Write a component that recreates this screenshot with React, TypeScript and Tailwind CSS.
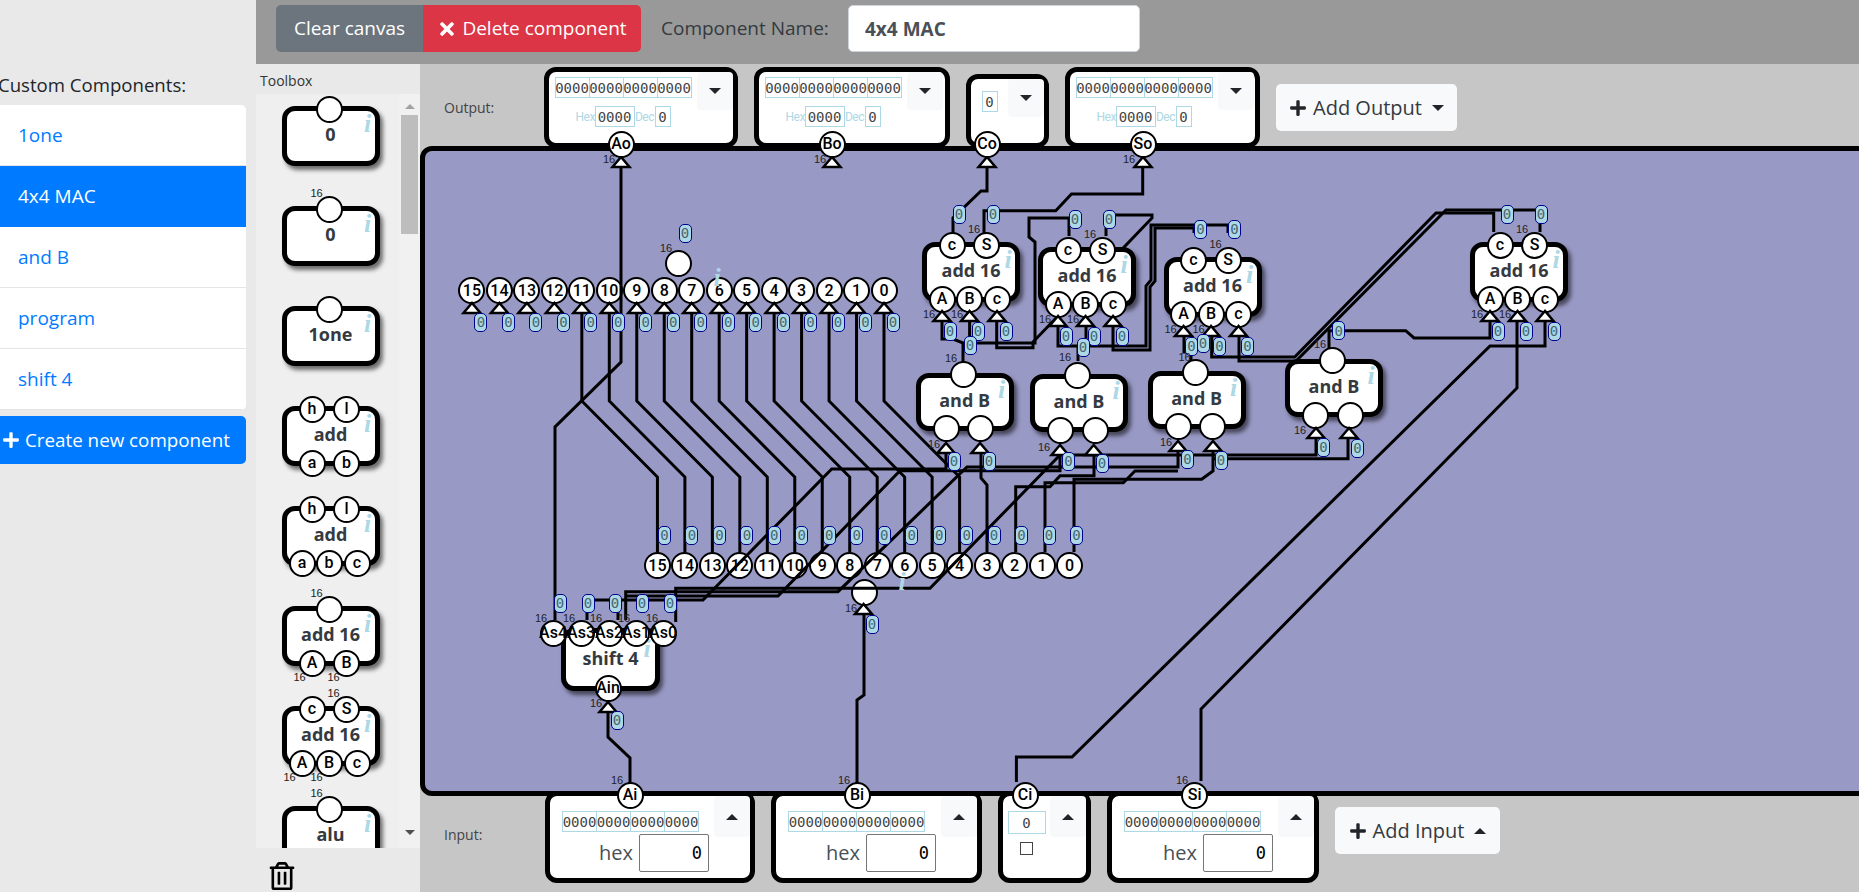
import type { ReactNode } from "react";
import { FaPlus, FaRegTrashAlt, FaTimes } from "react-icons/fa";

type P = [number, string?];

const MONO = "font-['DejaVu_Sans_Mono',monospace]";

// page coordinates of the parts on the board
const adders = [
  { x: 922, y: 245 },
  { x: 1038, y: 250 },
  { x: 1163.5, y: 260 },
  { x: 1470, y: 245 },
];
const ands = [
  { x: 915.7, y: 372.7 },
  { x: 1030, y: 374 },
  { x: 1147.7, y: 370.7 },
  { x: 1285, y: 359 },
];
const topBit = (i: number) => 884 - 27.47 * i;
const lowBit = (i: number) => 1069.5 - 27.47 * i;
const bits = Array.from({ length: 16 }, (_, i) => i);

const wires = [
  ...bits.slice(0, 12).map((i) => {
    const a = topBit(i);
    const b = a + 75.6;
    return `${a},313 ${a},401 ${b},477 ${b},552`;
  }),
  "621,167 621,362 555,427 555,620",
  "953,233 953,218 981,191 987,191 987,167",
  "984,233 984,210.7 1055.7,210.7 1071.5,194 1142.7,194 1142.7,167",
  "1016.4,782 1016.4,757 1072,757 1490,346 1545,346 1545,321",
  "1201,781 1201,709 1517,388 1517,321",
  "1329,361 1329,330.7 1405.7,330.7 1414,338 1490,338 1490,321",
  "1211.7,336 1211.7,357 1294.7,357 1436,213 1493.7,213 1493.7,232",
  "1239,336 1239,361 1296,361 1446,210 1540,210 1540,232",
  "1194,233 1194,228 1155,228 1155,281 1150,287 1150,350 1113,350 1113,326",
  "1228,233 1228,225 1151,225 1151,280 1146,286 1146,346 1058,346 1058,326",
  "1069,236 1069,218 1029,218 1029,237 1035,242 1035,343 963,343 953,339 942,339 942,321",
  "1106,236 1106,215 1152,215 1152,218 1033,342 1033,347.7 996.7,347.7 996.7,321",
  "963,362 963,343",
  "969.6,321 969.6,343",
  "1078,361 1078,347",
  "1086,326 1086,347",
  "1191,362 1191,346",
  "1184,336 1184,352 1191,352",
  "864,615 864,695 857,700 857,783",
  "608,711 608,737 630,758 630,783",
  "587,620 587,600 703,600 831.7,469 946,469 946,451",
  "618,620 618,600",
  "625.7,620 625.7,591.7 838,591.7 967,467 1178,467 1178,449",
  "625.7,596 778,596 900,470.7 1060,470.7 1060,453",
  "675.7,622 675.7,588.3 930,588.3 1060,455 1316,455 1316,438",
  "987,552 987,485 981,478 981,451",
  "1015.7,552 1015.7,486.7 1050,486.7 1060,475.7 1094,475.7 1094,453",
  "1045,552 1045,482.7 1123.3,482.7 1135,471 1178,471",
  "1074,552 1074,479.3 1201.7,479.3 1213,471 1213,449",
  "1213,458.7 1348,458.7 1348,438",
];

const triangles: [number, number][] = [
  [621, 157],
  [832, 157],
  [987, 157],
  [1143, 157],
  [608, 702],
  [863.5, 604],
  ...bits.map((i): [number, number] => [topBit(i), 303]),
  ...adders.flatMap((m): [number, number][] => [
    [m.x + 20, m.y + 66],
    [m.x + 47.5, m.y + 66],
    [m.x + 75, m.y + 66],
  ]),
  [946, 443],
  [980, 443],
  [1060, 445],
  [1093.7, 445],
  [1178, 441],
  [1213, 441],
  [1316, 428],
  [1349, 428],
];

const badges: [number, number][] = [
  [685, 233],
  [872, 624],
  [617, 720],
  [560, 603],
  [588, 603],
  [615, 603],
  [642, 603],
  [670, 603],
  ...bits.map((i): [number, number] => [topBit(i) + 9, 322]),
  ...bits.map((i): [number, number] => [lowBit(i) + 7, 535]),
  ...adders.flatMap((m): [number, number][] => [
    [m.x + 37, m.y - 31],
    [m.x + 71, m.y - 31],
    [m.x + 28, m.y + 86],
    [m.x + 56, m.y + 86],
    [m.x + 84, m.y + 86],
  ]),
  [954, 461],
  [989, 461],
  [1068.5, 461],
  [1102, 463],
  [1187.5, 459],
  [1221, 460],
  [1323.5, 447],
  [1357.5, 448],
  [970, 345],
  [1083, 347],
  [1203, 343],
  [1338.7, 330.7],
];

const sixteens: [number, number][] = [
  [609, 159],
  [820, 159],
  [1129, 159],
  [666, 248],
  [851, 608],
  [596, 703],
  [541, 618],
  [569, 618],
  [596, 618],
  [624, 618],
  [652, 618],
  [617, 780],
  [844, 780],
  [1182, 780],
  ...adders.flatMap((m): [number, number][] => [
    [m.x + 52, m.y - 16],
    [m.x + 7, m.y + 69],
    [m.x + 35, m.y + 69],
  ]),
  [934, 444],
  [951, 358],
  [1044, 447],
  [1065, 357],
  [1166, 442],
  [1184.5, 357],
  [1300, 430],
  [1320, 344],
];

function Pin({ x, y, label }: { x: number; y: number; label?: string }) {
  return (
    <div
      className="absolute flex h-[27px] w-[27px] items-center justify-center rounded-full border-[2.5px] border-black bg-white text-[16px] leading-none text-black font-['Roboto',sans-serif] font-medium"
      style={{ left: x - 13.5, top: y - 13.5 }}
    >
      <span className="whitespace-nowrap">{label}</span>
    </div>
  );
}

function Sixteen({ x, y }: { x: number; y: number }) {
  return (
    <span
      className="absolute -translate-x-1/2 -translate-y-1/2 text-[11px] leading-none text-[#222] font-['Liberation_Sans',sans-serif]"
      style={{ left: x, top: y }}
    >
      16
    </span>
  );
}

function InfoMark({ x, y }: { x: number; y: number }) {
  return (
    <span
      className="absolute -translate-x-1/2 -translate-y-1/2 text-[26px] font-bold italic leading-none text-[#add8e6] font-['Liberation_Serif',serif]"
      style={{ left: x, top: y }}
    >
      i
    </span>
  );
}

function Badge({ x, y }: { x: number; y: number }) {
  return (
    <div
      className={`absolute flex h-[19px] w-[13px] items-center justify-center rounded-[5px] border border-[#00008b] bg-[#add8e6] text-[14px] leading-none text-[#47656e] ${MONO}`}
      style={{ left: x - 6.5, top: y - 9.5 }}
    >
      0
    </div>
  );
}

interface ModuleProps {
  name: string;
  x?: number;
  y?: number;
  w?: number;
  h?: number;
  topY?: number;
  botY?: number;
  top?: P[];
  bottom?: P[];
  marks?: [number, number][];
  iy?: number;
}

function Module({ name, x, y, w = 98, h = 60, topY = 3, botY = 57, top = [], bottom = [], marks = [], iy = 18 }: ModuleProps) {
  return (
    <div
      className={x === undefined ? "relative ml-[25.5px] shrink-0" : "absolute"}
      style={x === undefined ? { width: w, height: h } : { left: x, top: y, width: w, height: h }}
    >
      <div className="absolute inset-0 flex items-center justify-center rounded-[13px] border-[5px] border-black bg-white pb-[3px] text-[18px] font-bold text-[#343a40] shadow-[3px_4px_4px_rgba(0,0,0,0.55)]">
        {name}
      </div>
      <InfoMark x={86} y={iy} />
      {top.map(([dx, label], i) => (
        <Pin key={i} x={dx} y={topY} label={label} />
      ))}
      {bottom.map(([dx, label], i) => (
        <Pin key={i} x={dx} y={botY} label={label} />
      ))}
      {marks.map(([mx, my], i) => (
        <Sixteen key={i} x={mx} y={my} />
      ))}
    </div>
  );
}

function Caret({ up }: { up?: boolean }) {
  return (
    <div
      className={
        up
          ? "h-0 w-0 border-x-[6px] border-b-[6px] border-x-transparent border-b-[#212529]"
          : "h-0 w-0 border-x-[6px] border-t-[6px] border-x-transparent border-t-[#212529]"
      }
    />
  );
}

function CaretButton({ up, h }: { up?: boolean; h: string }) {
  return (
    <div className={`flex w-[36px] shrink-0 items-center justify-center rounded-[4px] bg-[#f8f9fa] ${h}`}>
      <Caret up={up} />
    </div>
  );
}

function Cell({ children, className }: { children: ReactNode; className: string }) {
  return (
    <div className={`flex items-center justify-center border border-[#add8e6] text-[14px] leading-none text-[#444] ${MONO} ${className}`}>
      {children}
    </div>
  );
}

function BitRow() {
  return (
    <div className="flex">
      <Cell className="h-[21px] w-[35px]">0000</Cell>
      <Cell className="-ml-px h-[21px] w-[35px]">0000</Cell>
      <Cell className="-ml-px h-[21px] w-[35px]">0000</Cell>
      <Cell className="-ml-px h-[21px] w-[35px]">0000</Cell>
    </div>
  );
}

function OutputBox({ w }: { w: string }) {
  return (
    <div className={`relative mt-[3px] flex h-[81px] shrink-0 rounded-[12px] border-[5px] border-black bg-white ${w}`}>
      <div className="flex w-[148px] shrink-0 flex-col items-center pt-[5px]">
        <BitRow />
        <div className="mt-[8px] flex items-center text-[12px] leading-none tracking-[-0.5px] text-[#add8e6] font-['Roboto',sans-serif]">
          <span className="w-[19px]">Hex</span>
          <Cell className="h-[21px] w-[40px] tracking-normal">0000</Cell>
          <span className="w-[20px] text-center">Dec</span>
          <Cell className="h-[21px] w-[16px] tracking-normal">0</Cell>
        </div>
      </div>
      <CaretButton h="h-[38px]" />
    </div>
  );
}

function InputBox({ w }: { w: string }) {
  return (
    <div className={`-mt-[5px] flex h-[92px] shrink-0 rounded-[12px] border-[5px] border-black bg-white ${w}`}>
      <div className="flex flex-1 flex-col pl-[12px] pt-[15px]">
        <BitRow />
        <div className="mt-[2px] flex items-center justify-end gap-[6px] pr-[5px]">
          <span className="text-[20px] leading-none text-[#495057]">hex</span>
          <input
            readOnly
            value="0"
            className={`h-[38px] w-[70px] rounded-[2px] border border-[#767676] bg-white pr-[6px] text-right text-[17px] text-black ${MONO}`}
          />
        </div>
      </div>
      <CaretButton up h="h-[41px]" />
    </div>
  );
}

function AddButton({ label, up, w, className }: { label: string; up?: boolean; w: string; className: string }) {
  return (
    <div className={`flex h-[47px] shrink-0 items-center justify-center gap-[6px] rounded-[5px] bg-[#f8f9fa] text-[20px] text-[#343a40] ${w} ${className}`}>
      <FaPlus size={18} className="text-[#212529]" />
      <span>{label}</span>
      <span className="ml-[4px]">
        <Caret up={up} />
      </span>
    </div>
  );
}

function Toolbox() {
  const one: P[] = [[47.5]];
  return (
    <div className="flex w-[164px] shrink-0 flex-col bg-[#e9e9e9]">
      <div className="h-[30px] pl-[4px] pt-[6px] text-[14px] leading-[22px] text-[#333]">Toolbox</div>
      <div className="relative h-[754px] overflow-hidden bg-[#efefef]">
        <div className="flex flex-col gap-[40px] pt-[12px]">
          <Module name="0" top={one} />
          <Module name="0" top={one} marks={[[35, -13]]} />
          <Module name="1one" top={one} />
          <Module name="add" top={[[30.5, "h"], [65, "l"]]} bottom={[[30.5, "a"], [65, "b"]]} />
          <Module name="add" top={[[30.5, "h"], [65, "l"]]} bottom={[[20.5, "a"], [47.5, "b"], [75.5, "c"]]} />
          <Module name="add 16" top={one} bottom={[[30.5, "A"], [65, "B"]]} marks={[[35, -13], [18, 71], [52, 71]]} />
          <Module name="add 16" top={[[30.5, "c"], [65, "S"]]} bottom={[[20.5, "A"], [47.5, "B"], [75.5, "c"]]} marks={[[52, -13], [8, 71], [35, 71]]} />
          <Module name="alu" top={one} marks={[[35, -13]]} />
        </div>
        <div className="absolute inset-y-0 right-0 flex w-[21px] flex-col items-center bg-[#f1f1f1] pt-[10px]">
          <div className="h-0 w-0 border-x-[5px] border-b-[5px] border-x-transparent border-b-[#a3a3a3]" />
          <div className="mt-[6px] h-[119px] w-[17px] bg-[#bdbdbd]" />
          <div className="mt-[596px] h-0 w-0 border-x-[5px] border-t-[5px] border-x-transparent border-t-[#505050]" />
        </div>
      </div>
      <div className="pl-[12px] pt-[14px]">
        <FaRegTrashAlt size={28} className="text-black" />
      </div>
    </div>
  );
}

function Board() {
  return (
    <div className="absolute left-[-420px] top-[-64px] z-10 h-[892px] w-[1859px]">
      {bits.map((i) => (
        <Pin key={`t${i}`} x={topBit(i)} y={290.7} label={String(i)} />
      ))}
      {bits.map((i) => (
        <Pin key={`l${i}`} x={lowBit(i)} y={565.7} label={String(i)} />
      ))}
      <Pin x={678.6} y={263} />
      <Pin x={864} y={592} />

      <svg className="absolute inset-0" width={1859} height={892} viewBox="0 0 1859 892" fill="none" stroke="#000" strokeWidth={3}>
        {wires.map((points, i) => (
          <polyline key={i} points={points} />
        ))}
      </svg>

      {adders.map((m, i) => (
        <Module
          key={i}
          name="add 16"
          x={m.x}
          y={m.y - 3}
          top={[[30, "c"], [64.5, "S"]]}
          bottom={[[20, "A"], [47.5, "B"], [75, "c"]]}
        />
      ))}
      {ands.map((m, i) => (
        <Module key={i} name="and B" x={m.x} y={m.y} h={58} topY={1.5} botY={56} top={[[47.5]]} bottom={[[30.5], [65]]} iy={17} />
      ))}
      <Module
        name="shift 4"
        x={561}
        y={628}
        w={99}
        h={63}
        topY={5}
        botY={60}
        top={[[-8, "As4"], [20, "As3"], [48, "As2"], [75, "As1"], [102, "As0"]]}
        bottom={[[47, "Ain"]]}
        iy={21}
      />

      <svg className="absolute inset-0" width={1859} height={892} viewBox="0 0 1859 892" fill="#fff" stroke="#000" strokeWidth={2.5}>
        {triangles.map(([x, y], i) => (
          <polygon key={i} points={`${x},${y} ${x - 8.5},${y + 10} ${x + 8.5},${y + 10}`} />
        ))}
      </svg>

      <Pin x={621} y={144} label="Ao" />
      <Pin x={832} y={144} label="Bo" />
      <Pin x={987} y={144} label="Co" />
      <Pin x={1143} y={144} label="So" />
      <Pin x={630} y={795} label="Ai" />
      <Pin x={857} y={795} label="Bi" />
      <Pin x={1025} y={795} label="Ci" />
      <Pin x={1194.6} y={795} label="Si" />

      <InfoMark x={717} y={278} />
      <InfoMark x={902} y={582} />
      {badges.map(([x, y], i) => (
        <Badge key={i} x={x} y={y} />
      ))}
      {sixteens.map(([x, y], i) => (
        <Sixteen key={i} x={x} y={y} />
      ))}
    </div>
  );
}

export default function App() {
  const items = ["1one", "4x4 MAC", "and B", "program", "shift 4"];
  return (
    <div className="flex h-[892px] w-[1859px] overflow-hidden bg-[#e9e9e9] text-[#212529] font-['Open_Sans','Liberation_Sans',sans-serif]">
      <aside className="w-[256px] shrink-0 pt-[72px]">
        <div className="-ml-[2px] h-[33px] text-[18.6px] leading-[26px]">Custom Components:</div>
        <div className="w-[246px] overflow-hidden rounded-r-[5px] bg-white">
          {items.map((item) => (
            <div
              key={item}
              className={
                item === "4x4 MAC"
                  ? "flex h-[61px] items-center bg-[#007bff] pl-[18px] text-[19px] text-white"
                  : "flex h-[61px] items-center border-b border-[#e5e5e5] pl-[18px] text-[19px] text-[#007bff]"
              }
            >
              {item}
            </div>
          ))}
        </div>
        <div className="mt-[6px] flex h-[48px] w-[246px] items-center gap-[5px] rounded-r-[5px] bg-[#007bff] pl-[2px] text-[18.8px] text-white">
          <FaPlus size={18} />
          <span>Create new component</span>
        </div>
      </aside>

      <div className="flex min-w-0 flex-1 flex-col">
        <header className="flex h-[64px] shrink-0 items-start bg-[#999999] pl-[20px] pt-[5px] text-[19px]">
          <div className="flex h-[47px] w-[147px] items-center justify-center rounded-l-[5px] bg-[#6c757d] text-white">Clear canvas</div>
          <div className="flex h-[47px] w-[218px] items-center justify-center gap-[5px] rounded-r-[5px] bg-[#dc3545] text-white">
            <FaTimes size={20} />
            <span>Delete component</span>
          </div>
          <div className="ml-[20px] flex h-[47px] w-[187px] items-center text-[#343a40]">Component Name:</div>
          <input
            readOnly
            value="4x4 MAC"
            className="h-[47px] w-[292px] rounded-[5px] border border-[#ced4da] bg-white pl-[16px] text-[19px] font-bold text-[#495057]"
          />
        </header>

        <div className="flex min-h-0 flex-1">
          <Toolbox />
          <main className="relative min-w-0 flex-1 overflow-hidden bg-[#c6c6c6]">
            <div className="flex h-[82px] pl-[24px]">
              <div className="w-[100px] shrink-0 pt-[33px] text-[14px] leading-[22px] text-[#444]">Output:</div>
              <div className="flex gap-[16px]">
                <OutputBox w="w-[194px]" />
                <OutputBox w="w-[196px]" />
                <div className="relative mt-[10px] flex h-[74px] w-[83px] shrink-0 rounded-[12px] border-[5px] border-black bg-white">
                  <div className="flex flex-1 justify-center pt-[12px]">
                    <Cell className="h-[21px] w-[16px]">0</Cell>
                  </div>
                  <CaretButton h="h-[38px]" />
                </div>
                <OutputBox w="w-[195px]" />
                <AddButton label="Add Output" w="w-[181px]" className="mt-[20px]" />
              </div>
            </div>

            <div className="relative z-[1] h-[650px] w-[1460px] rounded-[12px] border-[5px] border-black bg-[#9999c6]" />

            <div className="flex pl-[24px]">
              <div className="w-[101px] shrink-0 pt-[28px] text-[14px] leading-[22px] text-[#444]">Input:</div>
              <div className="flex gap-[16px]">
                <InputBox w="w-[210px]" />
                <InputBox w="w-[211px]" />
                <div className="-mt-[5px] flex h-[92px] w-[93px] shrink-0 rounded-[12px] border-[5px] border-black bg-white">
                  <div className="flex flex-1 flex-col items-center pt-[15px]">
                    <Cell className="h-[23px] w-[38px]">0</Cell>
                    <input type="checkbox" readOnly className="mt-[8px] h-[13px] w-[13px] appearance-none border-[1.5px] border-[#444] bg-white" />
                  </div>
                  <CaretButton up h="h-[41px]" />
                </div>
                <InputBox w="w-[212px]" />
                <AddButton label="Add Input" up w="w-[165px]" className="mt-[11px]" />
              </div>
            </div>

            <Board />
          </main>
        </div>
      </div>
    </div>
  );
}
